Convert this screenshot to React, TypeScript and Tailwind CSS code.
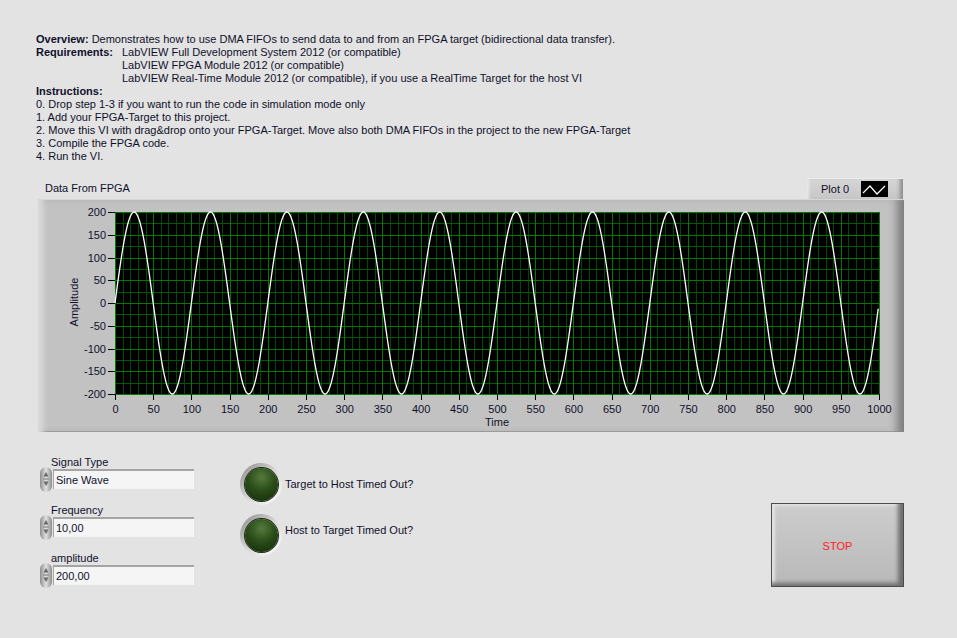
import React from "react"

// plot geometry, in frame coordinates
const PX0 = 77
const PX1 = 841
const PY0 = 12
const PY1 = 194
const xs = (v: number) => PX0 + (v / 1000) * (PX1 - PX0)
const ys = (v: number) => PY0 + ((200 - v) / 400) * (PY1 - PY0)

const xGrid = Array.from({ length: 101 }, (_, i) => i * 10)
const yGrid = Array.from({ length: 17 }, (_, i) => -200 + i * 25)
const xTicks = Array.from({ length: 21 }, (_, i) => i * 50)
const yTicks = Array.from({ length: 9 }, (_, i) => 200 - i * 50)

function sinePath() {
  let d = ""
  for (let i = 0; i < 1000; i++) {
    const y = 200 * Math.sin((2 * Math.PI * i) / 100)
    d += (i ? "L" : "M") + xs(i).toFixed(2) + "," + ys(y).toFixed(2)
  }
  return d
}

function Chart() {
  return (
    <svg width={866} height={233} className="block">
      <rect x={PX0} y={PY0} width={PX1 - PX0} height={PY1 - PY0} fill="#000" />
      {/* minor grid */}
      {xGrid.filter((v) => v % 50 !== 0).map((v) => (
        <line key={"xm" + v} x1={Math.round(xs(v)) + 0.5} x2={Math.round(xs(v)) + 0.5} y1={PY0} y2={PY1} stroke="#004a00" strokeWidth={1} />
      ))}
      {yGrid.filter((v) => v % 50 !== 0).map((v) => (
        <line key={"ym" + v} x1={PX0} x2={PX1} y1={Math.round(ys(v)) + 0.5} y2={Math.round(ys(v)) + 0.5} stroke="#005800" strokeWidth={1} />
      ))}
      {/* major grid */}
      {xTicks.map((v) => (
        <line key={"xM" + v} x1={Math.round(xs(v)) + 0.5} x2={Math.round(xs(v)) + 0.5} y1={PY0} y2={PY1} stroke="#007a00" strokeWidth={1} />
      ))}
      {yTicks.map((v) => (
        <line key={"yM" + v} x1={PX0} x2={PX1} y1={Math.round(ys(v)) + 0.5} y2={Math.round(ys(v)) + 0.5} stroke="#007a00" strokeWidth={1} />
      ))}
      <path d={sinePath()} fill="none" stroke="#fff" strokeWidth={1.3} />

      {/* y axis */}
      {yTicks.map((v) => (
        <g key={"yt" + v}>
          <line x1={70} x2={77} y1={Math.round(ys(v)) + 0.5} y2={Math.round(ys(v)) + 0.5} stroke="#000" />
          <text x={68} y={ys(v) + 4} textAnchor="end" fontSize={11} fill="#10102a">{v}</text>
        </g>
      ))}
      {/* x axis */}
      {xTicks.map((v) => (
        <g key={"xt" + v}>
          <line x1={Math.round(xs(v)) + 0.5} x2={Math.round(xs(v)) + 0.5} y1={194} y2={200} stroke="#000" />
          <text x={xs(v) + 0.5} y={213} textAnchor="middle" fontSize={11} fill="#10102a">{v}</text>
        </g>
      ))}
      <text x={459} y={226} textAnchor="middle" fontSize={11} fill="#10102a">Time</text>
      <text transform="translate(40,102) rotate(-90)" textAnchor="middle" fontSize={11} fill="#10102a">Amplitude</text>
    </svg>
  )
}

function Spinner() {
  return (
    <div className="flex h-[25px] w-[12px] flex-col items-center justify-center rounded-full bg-linear-to-r from-[#8e8e8e] via-[#e2e2e2] to-[#8e8e8e]">
      <svg width="8" height="20" viewBox="0 0 8 20">
        <path d="M4 3 L6.5 7.5 L1.5 7.5 Z" fill="#6a6a6a" />
        <line x1="1" x2="7" y1="10" y2="10" stroke="#7a7a7a" />
        <path d="M4 17 L6.5 12.5 L1.5 12.5 Z" fill="#6a6a6a" />
      </svg>
    </div>
  )
}

function Field({ label, value }: { label: string; value: string }) {
  return (
    <div className="flex flex-col">
      <div className="pl-[11px] leading-[13px]">{label}</div>
      <div className="-mt-[2px] flex h-[24px] items-center gap-px">
        <Spinner />
        <div className="flex h-[20px] w-[141px] items-center border-t-2 border-l border-[#a4a4a4] bg-[#f5f5f5] pl-[2px] pt-px">
          {value}
        </div>
      </div>
    </div>
  )
}

function Led({ label, textUp }: { label: string; textUp?: boolean }) {
  return (
    <div className="flex items-center gap-[3px]">
      <div className="flex h-[42px] w-[42px] items-center justify-center rounded-full bg-linear-to-br from-[#8a8a8a] via-[#d8d8d8] to-white">
        <div className="h-[33px] w-[33px] rounded-full bg-[radial-gradient(circle_at_50%_28%,#557a3c_0%,#2c4e1a_45%,#1c3510_80%)] shadow-[0_0_0_1px_#1a2a10]" />
      </div>
      <span className={textUp ? "-mt-[10px]" : ""}>{label}</span>
    </div>
  )
}

export default function App() {
  return (
    <div className="h-[638px] w-[957px] overflow-hidden bg-[#e3e3e3] font-['Liberation_Sans',Arial,sans-serif] text-[11px] text-[#10102a]">
      {/* description */}
      <div className="pl-[36px] pt-[33px] leading-[13px]">
        <div>
          <b>Overview:</b> Demonstrates how to use DMA FIFOs to send data to and from an FPGA target (bidirectional data transfer).
        </div>
        <div className="flex">
          <b className="w-[86px]">Requirements:</b>
          <div>
            <div>LabVIEW Full Development System 2012 (or compatible)</div>
            <div>LabVIEW FPGA Module 2012 (or compatible)</div>
            <div>LabVIEW Real-Time Module 2012 (or compatible), if you use a RealTime Target for the host VI</div>
          </div>
        </div>
        <b>Instructions:</b>
        <div>0. Drop step 1-3 if you want to run the code in simulation mode only</div>
        <div>1. Add your FPGA-Target to this project.</div>
        <div>2. Move this VI with drag&amp;drop onto your FPGA-Target. Move also both DMA FIFOs in the project to the new FPGA-Target</div>
        <div>3. Compile the FPGA code.</div>
        <div>4. Run the VI.</div>
      </div>

      {/* chart */}
      <div className="ml-[38px] mt-[14px] w-[866px]">
        <div className="flex h-[22px] items-end justify-between">
          <span className="pb-[3px] pl-[7px]">Data From FPGA</span>
          <div className="mr-px flex h-[21px] w-[96px] items-center border-t border-[#ececec] bg-linear-to-b from-[#d6d6d6] to-[#c6c6c6] pl-[14px] shadow-[inset_-6px_0_4px_-3px_#8a8a8a,inset_4px_0_3px_-2px_#ebebeb]">
            <span className="w-[40px]">Plot 0</span>
            <svg width="27" height="16" className="block">
              <rect width="27" height="16" fill="#000" />
              <polyline points="2,12 9,5 16,13 24,5" fill="none" stroke="#fff" strokeWidth="1.2" />
            </svg>
          </div>
        </div>
        <div className="h-[233px] w-[866px] border-t border-[#d6d6d6] bg-[#c2c2c2] shadow-[inset_9px_0_6px_-4px_#dcdcdc,inset_-11px_0_8px_-4px_#7e7e7e,inset_0_-1px_0_#9a9a9a]">
          <Chart />
        </div>
      </div>

      {/* controls */}
      <div className="mt-[24px] flex items-start pl-[40px] pr-[53px]">
        <div className="flex w-[155px] flex-col gap-[13px]">
          <Field label="Signal Type" value="Sine Wave" />
          <Field label="Frequency" value="10,00" />
          <Field label="amplitude" value="200,00" />
        </div>
        <div className="ml-[45px] mt-[7px] flex flex-col gap-[9px]">
          <Led label="Target to Host Timed Out?" />
          <Led label="Host to Target Timed Out?" textUp />
        </div>
        <button className="ml-auto mt-[47px] flex h-[84px] w-[133px] items-center justify-center border border-[#4c4c4c] bg-linear-to-b from-[#cdcdcd] to-[#b8b8b8] pt-[3px] text-[11px] text-[#ff2020] shadow-[inset_-7px_-5px_4px_-2px_#6e6e6e,inset_5px_4px_3px_-2px_#e2e2e2]">
          STOP
        </button>
      </div>
    </div>
  )
}
